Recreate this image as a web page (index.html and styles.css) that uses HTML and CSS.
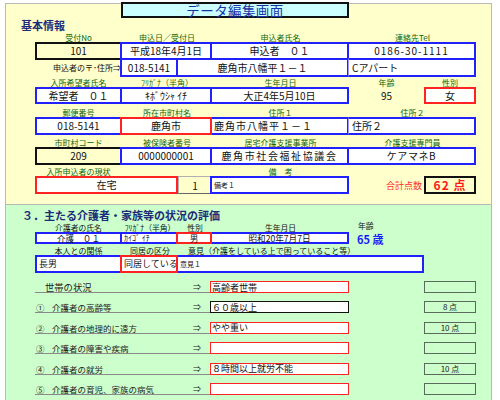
FILE: index.html
```html
<!DOCTYPE html>
<html lang="ja">
<head>
<meta charset="utf-8">
<title>データ編集画面</title>
<link rel="stylesheet" href="styles.css">
</head>
<body>
<div class="panel yellow">
  <div class="g trow"><div class="title sp3 c2">データ編集画面</div></div>
  <div class="heading">基本情報</div>

  <div class="g lr r1l">
    <span class="lab">受付No</span><span class="lab sp2">申込日／受付日</span><span class="lab">申込者氏名</span><span class="lab sp2">連絡先Tel</span>
  </div>
  <div class="g br h18">
    <div class="b k first">101</div>
    <div class="b sp2">平成18年4月1日</div>
    <div class="b">申込者　０１</div>
    <div class="b sp2 ph">0186-30-1111</div>
  </div>
  <div class="g br h19 up">
    <div class="side">申込者の〒･住所⇒</div>
    <div class="b">018-5141</div>
    <div class="b sp2">鹿角市八幡平１－１</div>
    <div class="b sp2 l thin">Cアパート</div>
  </div>

  <div class="g lr r3l">
    <span class="lab">入所希望者氏名</span><span class="lab sp2">ﾌﾘｶﾞﾅ（半角）</span><span class="lab">生年月日</span><span class="lab">年齢</span><span class="lab">性別</span>
  </div>
  <div class="g br h17">
    <div class="b first">希望者　０１</div>
    <div class="b sp2">ｷﾎﾞｳｼｬ ｲﾁ</div>
    <div class="b">大正4年5月10日</div>
    <div class="plain">95</div>
    <div class="b red first">女</div>
  </div>

  <div class="g lr r4l">
    <span class="lab">郵便番号</span><span class="lab sp2">所在市町村名</span><span class="lab">住所１</span><span class="lab sp2">住所２</span>
  </div>
  <div class="g br h18">
    <div class="b first">018-5141</div>
    <div class="b sp2 red">鹿角市</div>
    <div class="b l wide1">鹿角市八幡平１－１</div>
    <div class="b sp2 l thin">住所２</div>
  </div>

  <div class="g lr r5l">
    <span class="lab">市町村コード</span><span class="lab sp2">被保険者番号</span><span class="lab">居宅介護支援事業所</span><span class="lab sp2">介護支援専門員</span>
  </div>
  <div class="g br h18">
    <div class="b k first">209</div>
    <div class="b sp2">0000000001</div>
    <div class="b wide2">鹿角市社会福祉協議会</div>
    <div class="b sp2 sp05">ケアマネB</div>
  </div>

  <div class="g lr r6l">
    <span class="lab">入所申込者の現状</span><span class="lab sp2"></span><span class="lab">備　考</span>
  </div>
  <div class="g br h18">
    <div class="b sp2 red first">在宅</div>
    <div class="num">1</div>
    <div class="b l tiny">備考１</div>
    <div class="total">合計点数</div>
    <div class="b k first pts">62 点</div>
  </div>
</div>

<div class="panel green">
  <div class="heading h2">３．主たる介護者・家族等の状況の評価</div>

  <div class="g lr gl1">
    <span class="lab blk">介護者の氏名</span><span class="lab blk">ﾌﾘｶﾞﾅ（半角）</span><span class="lab blk">性別</span><span class="lab blk">生年月日</span><span class="lab blk age">年齢</span>
  </div>
  <div class="g br h12 sm">
    <div class="b first">介護　０１</div>
    <div class="b l kana">ｶｲｺﾞ ｲﾁ</div>
    <div class="b red">男</div>
    <div class="b">昭和20年7月7日</div>
    <div class="agev">65 歳</div>
  </div>

  <div class="g lr gl2">
    <span class="lab blk">本人との関係</span><span class="lab blk">同居の区分</span><span class="lab blk sp3 opin">意見（介護をしている上で困っていること等）</span>
  </div>
  <div class="g br h18 sm">
    <div class="b first l">長男</div>
    <div class="b red l">同居している</div>
    <div class="b sp3 l tiny">意見１</div>
  </div>

  <div class="list">
    <div class="g item">
      <div class="itxt sp3"><span class="ind">世帯の状況</span><span class="arr">⇒</span></div>
      <div class="b red l v">高齢者世帯</div>
      <div></div>
      <div class="score"></div>
    </div>
    <div class="g item">
      <div class="itxt sp3"><span><span class="cn">①</span>介護者の高齢等</span><span class="arr">⇒</span></div>
      <div class="b k2 l v">６０歳以上</div>
      <div></div>
      <div class="score">8 点</div>
    </div>
    <div class="g item">
      <div class="itxt sp3"><span><span class="cn">②</span>介護者の地理的に遠方</span><span class="arr">⇒</span></div>
      <div class="b red l v">やや重い</div>
      <div></div>
      <div class="score">10 点</div>
    </div>
    <div class="g item">
      <div class="itxt sp3"><span><span class="cn">③</span>介護者の障害や疾病</span><span class="arr">⇒</span></div>
      <div class="b red l v"></div>
      <div></div>
      <div class="score"></div>
    </div>
    <div class="g item">
      <div class="itxt sp3"><span><span class="cn">④</span>介護者の就労</span><span class="arr">⇒</span></div>
      <div class="b red l v">８時間以上就労不能</div>
      <div></div>
      <div class="score">10 点</div>
    </div>
    <div class="g item">
      <div class="itxt sp3"><span><span class="cn">⑤</span>介護者の育児、家族の病気</span><span class="arr">⇒</span></div>
      <div class="b red l v"></div>
      <div></div>
      <div class="score"></div>
    </div>
  </div>
</div>
</body>
</html>
```

FILE: styles.css
```css
* { box-sizing: border-box; }
html, body { margin: 0; padding: 0; background: #ffffff; }
body {
  font-family: "Noto Sans CJK JP", "Noto Sans", sans-serif;
  color: #111;
  width: 500px;
  height: 400px;
  overflow: hidden;
}

.panel {
  width: 487px;
  margin-left: 5px;
  border: 1px solid #b9b9b9;
}
.yellow {
  background: #ffffcc;
  margin-top: 3px;
  height: 202px;
}
.green {
  background: #ccffcc;
  border-top: 0;
  height: 200px;
}

.g {
  display: grid;
  grid-template-columns: 87px 56px 34px 137px 75px 52px;
  grid-template-rows: minmax(0, 1fr);
  margin-left: 29px;
}
.sp2 { grid-column: span 2; }
.sp3 { grid-column: span 3; }
.c2 { grid-column: 2 / span 3; }

.trow { height: 14px; }
.title {
  margin-top: -2px;
  height: 16px;
  margin-left: -1px;
  background: #ccffff;
  border: 2px solid #111;
  color: #1433a8;
  font-size: 13.5px;
  letter-spacing: 0.4px;
  line-height: 12px;
  text-align: center;
}

.heading {
  font-size: 11px;
  font-weight: bold;
  color: #1c2c78;
  line-height: 14px;
  height: 14px;
  padding-left: 15px;
}
.h2 {
  height: 19px;
  line-height: 14px;
  padding-top: 3px;
  padding-left: 16px;
}

.lr { align-items: end; }
.lab {
  font-size: 8px;
  line-height: 9px;
  color: #0d660d;
  text-align: center;
  white-space: nowrap;
}
.blk { color: #111; }
.r1l { height: 10px; }
.r3l { height: 10px; }
.r4l { height: 13px; }
.r5l { height: 12px; }
.r6l { height: 11px; }
.gl1 { height: 8px; }
.gl1 .lab { line-height: 7px; font-size: 7.8px; margin-bottom: 1px; }
.gl1 .age { margin-bottom: 3px; margin-top: -3px; }
.gl2 { height: 11px; }
.age { text-align: left; padding-left: 9px; }
.opin { text-align: left; padding-left: 10px; }

.h12 { height: 12px; }
.h17 { height: 17px; }
.h18 { height: 18px; }
.h19 { height: 19px; }
.up { margin-top: -2px; }

.b {
  border: 2px solid #2121ff;
  margin-left: -2px;
  background: #ffffff;
  display: flex;
  align-items: center;
  justify-content: center;
  font-size: 10px;
  line-height: 12px;
  white-space: nowrap;
  overflow: hidden;
  color: #111;
}
.first { margin-left: 0; }
.k { border-color: #111; background: #ffffcc; }
.k2 { border-color: #111; }
.red { border-color: #ff2222; z-index: 1; }
.l { justify-content: flex-start; padding-left: 2px; }
.thin { border-left: 1px solid #9a9aff; margin-left: -1px; padding-left: 3px; }
.ph { letter-spacing: 1px; }
.wide1 { letter-spacing: 1px; }
.wide2 { letter-spacing: 1.6px; }
.sp05 { letter-spacing: 0.6px; }
.tiny { font-size: 7px; }

.side {
  font-size: 8px;
  display: flex;
  align-items: center;
  justify-content: flex-end;
  padding-right: 1px;
  white-space: nowrap;
  color: #111;
}
.plain {
  display: flex;
  align-items: center;
  justify-content: center;
  font-size: 10px;
}
.num {
  background: #ffffcc;
  border: 1px solid #b0b0b0;
  border-right-color: #666;
  border-bottom-color: #666;
  display: flex;
  align-items: center;
  justify-content: center;
  font-size: 10px;
}
.total {
  display: flex;
  align-items: center;
  justify-content: flex-end;
  padding-right: 2px;
  color: #ff2a2a;
  font-size: 9px;
  white-space: nowrap;
}
.pts {
  color: #ff1a1a;
  font-weight: bold;
  font-size: 12px;
  letter-spacing: 1px;
}

.sm .b { font-size: 9px; line-height: 10px; }
.h12 .b { font-size: 8.6px; line-height: 8px; overflow: visible; }
.sm .tiny { font-size: 7px; }
.kana { font-size: 8px !important; }
.agev {
  display: flex;
  align-items: flex-start;
  padding-top: 3px;
  padding-left: 8px;
  color: #1a1aff;
  font-weight: bold;
  font-size: 11px;
  line-height: 9px;
  white-space: nowrap;
}

.list {
  margin-top: 8px;
  display: flex;
  flex-direction: column;
  gap: 8.4px;
}
.item { height: 12px; }
.itxt {
  display: flex;
  justify-content: space-between;
  align-items: flex-end;
  border-bottom: 1px solid #8a8a8a;
  font-size: 8.5px;
  line-height: 10px;
  color: #222;
  white-space: nowrap;
  padding-left: 1px;
  padding-right: 11px;
}
.ind { padding-left: 9px; font-size: 9.3px; }
.cn { display: inline-block; width: 16px; }
.arr { font-size: 8px; }
.v {
  font-size: 9px !important;
  line-height: 9px;
  border-width: 1.5px;
  padding-left: 1px;
  overflow: visible;
}
.score {
  border: 1.5px solid #5a6a5a;
  display: flex;
  align-items: center;
  justify-content: center;
  font-size: 8px;
  line-height: 8px;
  color: #222;
  white-space: nowrap;
}
```
